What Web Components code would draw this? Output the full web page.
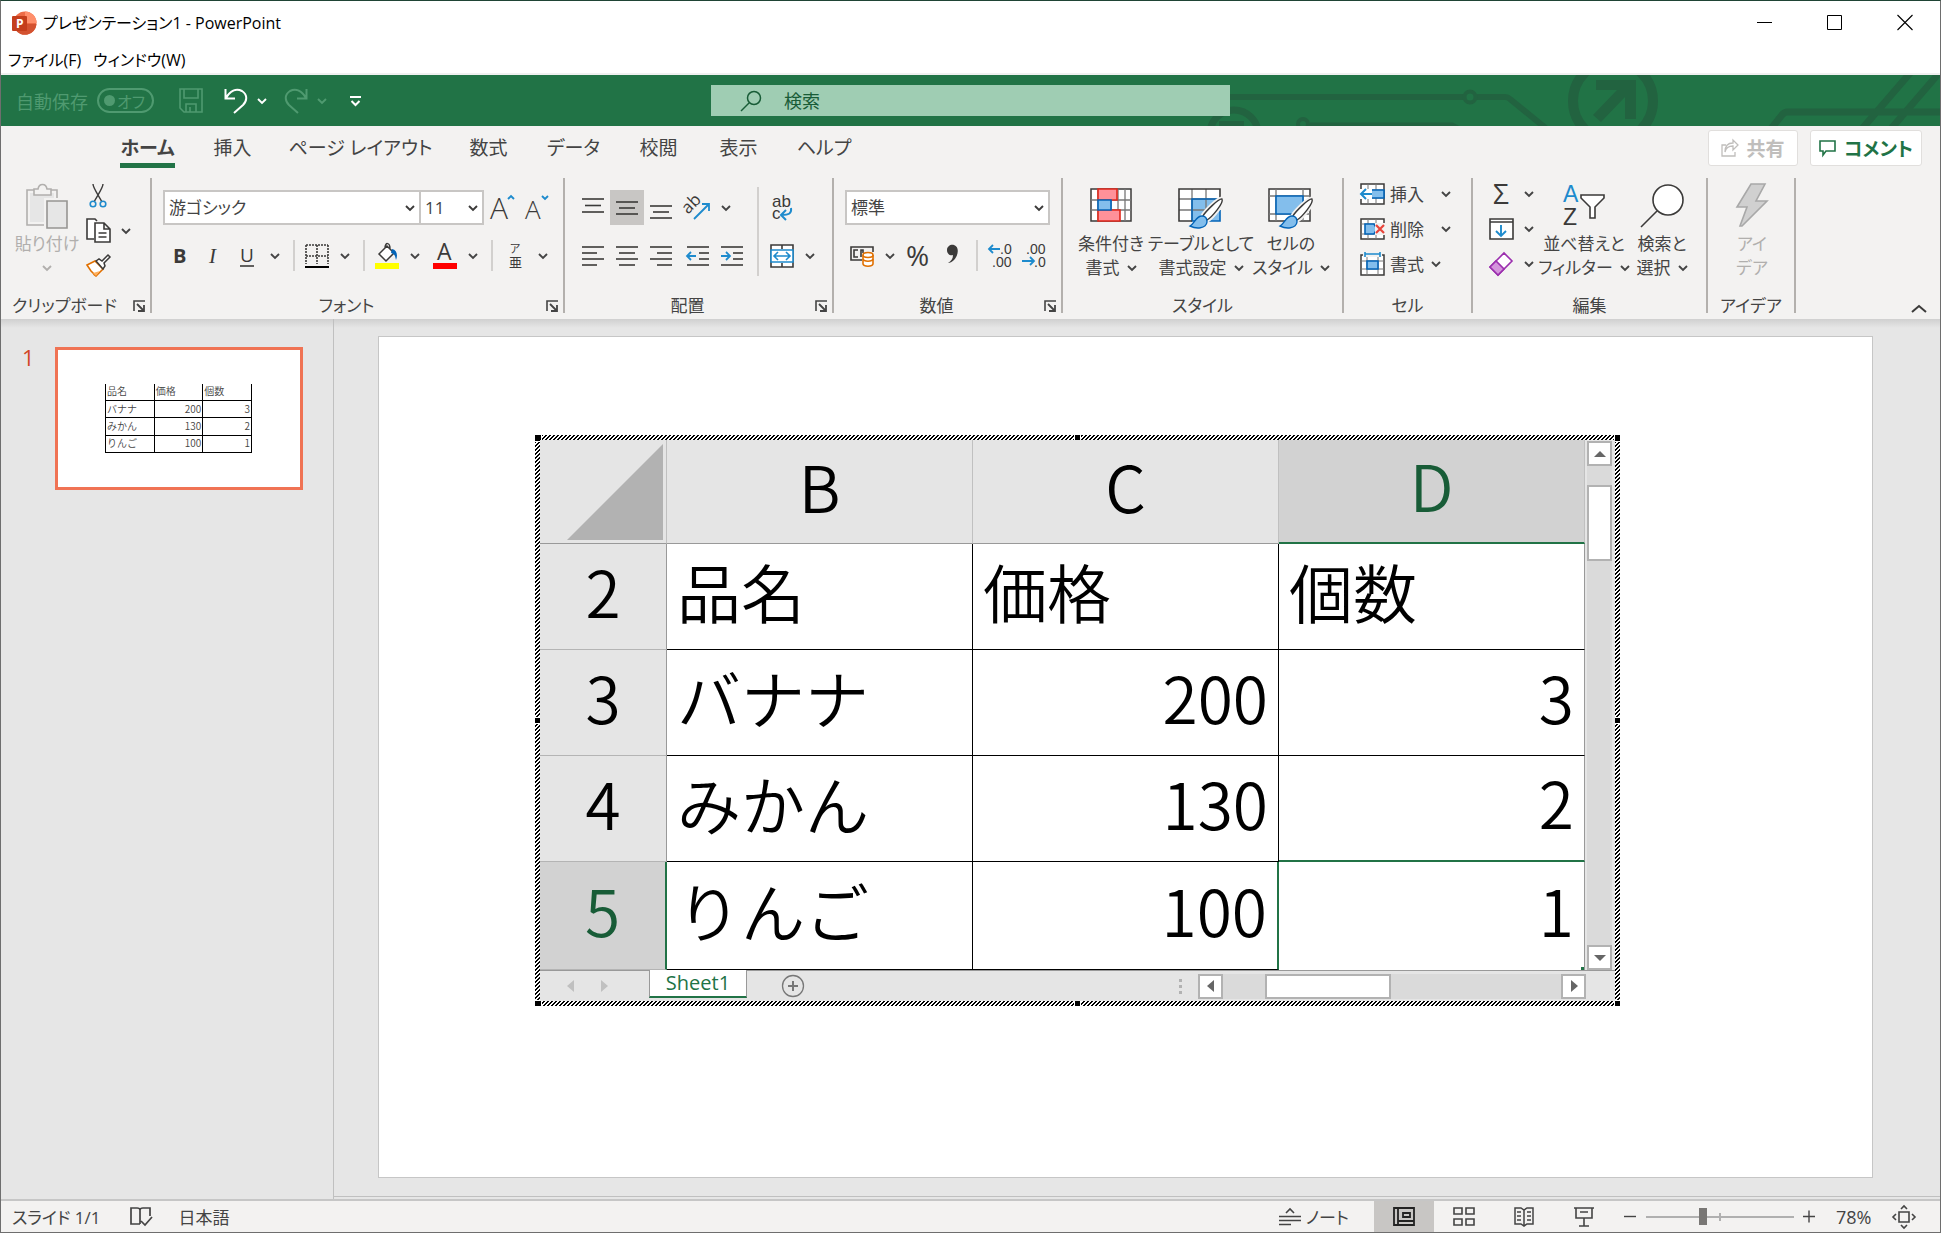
<!DOCTYPE html>
<html lang="ja">
<head>
<meta charset="utf-8">
<title>プレゼンテーション1 - PowerPoint</title>
<style>
html,body{margin:0;height:100%}
body{font-family:"Open Sans","Noto Sans CJK JP",sans-serif;font-size:17px;color:#444;font-feature-settings:"palt";overflow:hidden}
</style>
</head>
<body>
<office-app></office-app>
<script>
const D='#3b3a39', B='#1e8bcd', F='#83beec', E='#0364b8';
const grid=(w,h)=>`<path d="M1 1H${w-1}V${h-1}H1z" fill="#fff" stroke="${D}" stroke-width="1.5"/>`;
const brush=`<path d="M44 11c-3-1-17 13-19 17l4 4c5-3 17-17 15-21z" fill="#fff" stroke="#f3f2f1" stroke-width="5"/><path d="M44 11c-3-1-17 13-19 17l4 4c5-3 17-17 15-21z" fill="#fff" stroke="${D}" stroke-width="1.4"/><path d="M24 28c-6 0-7 7-12 10 6 3 16 3 17-4 0-4-2-6-5-6z" fill="${F}" stroke="${E}" stroke-width="1.4"/>`;
const lines=(a)=>a.map(([x,y,w])=>`<path d="M${x} ${y}h${w}" stroke="${D}" stroke-width="1.6"/>`).join('');
const LS='font-family="Liberation Sans"';
const ICONS={
 app:[25,24,`<circle cx="13" cy="12" r="11.5" fill="#ed6c47"/><path d="M13 .5A11.500 11.500 0 0 1 24.500 12H13z" fill="#ff8f6b"/><path d="M2 13h22.500A11.500 11.500 0 0 1 3 18z" fill="#d35230"/><rect x="0" y="5" width="15" height="15" rx="1" fill="#c43e1c"/><text x="4" y="17" font-size="12" font-weight="700" fill="#fff">P</text>`],
 min:[16,16,`<path d="M0 8.500h15" stroke="#000"/>`],
 max:[16,16,`<path d="M.5 1.500h14v14h-14z" fill="none" stroke="#000"/>`],
 close:[16,16,`<path d="M.5 1l15 15M15.500 1l-15 15" stroke="#000" stroke-width="1.100"/>`],
 caret:[10,6,`<path d="M1 1l4 4 4-4" fill="none" stroke="currentColor" stroke-width="1.900"/>`],
 up:[16,8,`<path d="M1 7l7-6 7 6" fill="none" stroke="currentColor" stroke-width="2"/>`],
 save:[24,25,`<path d="M1 1h22v23H5l-4-4zM5 1v9h14V1M7 24v-8h10v8M11 24v-5" fill="none" stroke="currentColor" stroke-width="1.600"/>`],
 undo:[24,26,`<path d="M1.500 1v9.500H11M2 10C6 3 12 0 18 3c6 4 5 10 1 14l-9 8" fill="none" stroke="currentColor" stroke-width="2"/>`],
 redo:[24,26,`<path d="M22.500 1v9.500H13M22 10C18 3 12 0 6 3c-6 4-5 10-1 14l9 8" fill="none" stroke="currentColor" stroke-width="2"/>`],
 custom:[11,10,`<path d="M0 1h11" stroke="#fff" stroke-width="2"/><path d="M1.500 5l4 4 4-4" fill="none" stroke="#fff" stroke-width="2"/>`],
 search:[22,22,`<circle cx="14" cy="8" r="6.500" fill="none" stroke="#185c37" stroke-width="1.500"/><path d="M9 13l-8 8" stroke="#185c37" stroke-width="1.500"/>`],
 share:[18,18,`<path d="M5 6H1v11h13v-4M4 13c1-5 4-6 8-6v4l5-5-5-5v3C7 4 4 7 4 13z" fill="none" stroke="currentColor" stroke-width="1.300"/>`],
 comment:[18,16,`<path d="M1 1h15v10H7l-3 4v-4H1z" fill="none" stroke="currentColor" stroke-width="1.600"/>`],
 paste:[42,46,`<path d="M1 7h30v35H1z" fill="#f3f2f1" stroke="#b1afad" stroke-width="1.600"/><path d="M4 10h24v29H4z" fill="#e6e6e6"/><path d="M8 12V6h4c1-6 8-6 9 0h4v6z" fill="#f3f2f1" stroke="#b1afad" stroke-width="1.600"/><path d="M18 15h24v31H18z" fill="#f3f2f1"/><path d="M21 18h20v27H21z" fill="#e6e6e6" stroke="#979593" stroke-width="1.600"/>`],
 cut:[18,24,`<path d="M4 0c0 4 6 12 9 18M14 0c0 4-6 12-9 18" fill="none" stroke="${D}" stroke-width="1.400"/><circle cx="4" cy="20" r="2.800" fill="none" stroke="${B}" stroke-width="1.600"/><circle cx="14" cy="20" r="2.800" fill="none" stroke="${B}" stroke-width="1.600"/>`],
 copy:[25,25,`<path d="M8 21H1V1h8l2 2" fill="#fff" stroke="${D}" stroke-width="1.600"/><path d="M9 5h9l6 6v13H9zM18 5v6h6M12.500 15h8M12.500 19h8" fill="#fff" stroke="${D}" stroke-width="1.600"/>`],
 painter:[25,23,`<path d="M1 11l8-4 8 8-7 7c-2-1-3-3-3-3l-2-2z" fill="#fff" stroke="#e07000" stroke-width="1.600"/><path d="M7 19l7-2-4 5z" fill="#ffb05c"/><path d="M10 7l3-2 3 2 6-6 2 2-6 6 1 3-2 3z" fill="#fff" stroke="${D}" stroke-width="1.500"/>`],
 launch:[12,12,`<path d="M1 11V1h11" fill="none" stroke="#444" stroke-width="1.600"/><path d="M4 4l7 7M11 5v6H5" fill="none" stroke="#444" stroke-width="1.800"/>`],
 grow:[26,26,`<text x="0" y="24" font-size="30" font-weight="300" fill="${D}">A</text><path d="M18 4l3-3 3 3" fill="none" stroke="${B}" stroke-width="1.900"/>`],
 shrink:[26,26,`<text x="1" y="24" font-size="26" font-weight="300" fill="${D}">A</text><path d="M18 1l3 3 3-3" fill="none" stroke="${B}" stroke-width="1.900"/>`],
 bold:[18,24,`<text x="3" y="19" font-size="20" font-weight="700" fill="${D}">B</text>`],
 italic:[18,24,`<text x="5" y="19" font-size="21" font-style="italic" font-family="Liberation Serif" fill="${D}">I</text>`],
 under:[18,24,`<text x="2" y="18" font-size="19" fill="${D}">U</text><path d="M2 22h14" stroke="${D}" stroke-width="1.600"/>`],
 borders:[24,24,`<path d="M1 1h22M1 12h22M1 1v19M12 1v19M23 1v19" fill="none" stroke="${D}" stroke-width="1.600" stroke-dasharray="2 1"/><path d="M0 23h24" stroke="#000" stroke-width="2"/>`],
 fill:[24,26,`<path d="M4 11l8-8 7 7-8 8zM10 5c0-6 5-6 5 1" fill="#fff" stroke="${D}" stroke-width="1.500"/><path d="M17 6c5 1 6 6 4 11-1-4-1-6-5-7z" fill="${E}"/><rect y="20" width="24" height="6" fill="#ff0"/>`],
 color:[24,26,`<text x="4" y="17" font-size="23" fill="${D}">A</text><rect y="20" width="24" height="6" fill="red"/>`],
 ruby:[16,26,`<text x="3" y="10" font-size="11" fill="${D}">ア</text><text x="2" y="24" font-size="13" fill="${D}">亜</text>`],
 atop:[24,24,lines([[1,3,22],[4,9.5,16],[1,16,22]])],
 amid:[24,24,lines([[1,6,22],[4,12,16],[1,18,22]])],
 abot:[24,24,lines([[1,10,22],[4,16,16],[1,22,22]])],
 left:[24,24,lines([[1,3,22],[1,9,15],[1,15,22],[1,21,15]])],
 center:[24,24,lines([[1,3,22],[4,9,16],[1,15,22],[4,21,16]])],
 right:[24,24,lines([[1,3,22],[8,9,15],[1,15,22],[8,21,15]])],
 outdent:[24,24,lines([[1,3,22],[13,9,10],[13,15,10],[1,21,22]])+`<path d="M10 12H2M5 8l-4 4 4 4" fill="none" stroke="${B}" stroke-width="1.800"/>`],
 indent:[24,24,lines([[1,3,22],[13,9,10],[13,15,10],[1,21,22]])+`<path d="M1 12h8M6 8l4 4-4 4" fill="none" stroke="${B}" stroke-width="1.800"/>`],
 orient:[26,26,`<g transform="rotate(-45 8 12)"><text x="-1" y="14" font-size="17" fill="${D}">ab</text></g><path d="M9 24L24 9M17 9h7v7" fill="none" stroke="${B}" stroke-width="1.800"/>`],
 wrap:[24,26,`<text x="2" y="12" font-size="17" ${LS} fill="${D}">ab</text><text x="2" y="24" font-size="17" ${LS} fill="${D}">c</text><path d="M21 13c1 6-3 7-9 7M16 15l-5 5 5 5" fill="none" stroke="${B}" stroke-width="2"/>`],
 merge:[24,24,`<path d="M1 1h22v22H1zM12 1v4M12 19v4" fill="#fff" stroke="${D}" stroke-width="1.600"/><path d="M1 6h22v12H1z" fill="#fff" stroke="${B}" stroke-width="1.600"/><path d="M4 12h16M8 8l-4 4 4 4M16 8l4 4-4 4" fill="none" stroke="${B}" stroke-width="1.600"/>`],
 money:[26,22,`<path d="M13 15H2V2h22v5M9 5H5v7h4M14 8V5h-2v7" fill="none" stroke="${D}" stroke-width="1.600"/><path d="M14 10v9c1 3 9 3 10 0v-9" fill="#fff" stroke="#e07000" stroke-width="1.600"/><ellipse cx="19" cy="10" rx="5" ry="2.500" fill="#fff" stroke="#e07000" stroke-width="1.600"/><path d="M14 14c1 3 9 3 10 0" fill="none" stroke="#e07000" stroke-width="1.600"/>`],
 percent:[26,26,`<text x="1" y="23" font-size="28" fill="${D}">%</text>`],
 comma:[14,24,`<path d="M2 6c0-4 4-6 7-5 6 2 4 11 0 15-2 2-4 3-6 3 3-2 5-4 5-8-3 1-6-1-6-5z" fill="${D}"/>`],
 inc:[24,26,`<path d="M12 6H1M5 2L1 6l4 4" fill="none" stroke="${B}" stroke-width="1.800"/><text x="12" y="11" font-size="14" ${LS} fill="${D}">.0</text><text x="4" y="24" font-size="14" ${LS} fill="${D}">.00</text>`],
 dec:[24,26,`<text x="4" y="11" font-size="14" ${LS} fill="${D}">.00</text><path d="M0 18h12M8 14l4 4-4 4" fill="none" stroke="${B}" stroke-width="1.800"/><text x="12" y="24" font-size="14" ${LS} fill="${D}">.0</text>`],
 cond:[43,44,`<g transform="translate(0 5)">${grid(42,34)}<path d="M8 1v32M21 1v32M28 1v32M35 1v32M1 12h40M1 22h40" stroke="#777" stroke-width="1.300"/><path d="M8 1h19v11H8zM8 22h22v11H8z" fill="#ff9199" stroke="#e0281c" stroke-width="1.600"/><path d="M8 12h13v10H8z" fill="${F}" stroke="${E}" stroke-width="1.600"/></g>`],
 tstyle:[46,44,`<g transform="translate(0 5)"><path d="M14 11h28v22H14z" fill="${F}"/><path d="M1 1h41v10H14v22H1z" fill="#fff"/><path d="M1 11h41M1 22h41M14 1v32M28 1v32" stroke="#777" stroke-width="1.300"/><path d="M42 22v11H14V11h28" fill="none" stroke="${E}" stroke-width="1.600"/><path d="M14 33H1V1h41v10" fill="none" stroke="${D}" stroke-width="1.600"/>${brush}</g>`],
 cstyle:[46,44,`<g transform="translate(0 5)">${grid(43,34)}<path d="M8 1v32M35 1v32M1 8h41M1 26h41" stroke="#777" stroke-width="1.300"/><path d="M8 8h27v18H8z" fill="${F}" stroke="${E}" stroke-width="1.600"/>${brush}</g>`],
 cins:[25,22,`${grid(25,22)}<path d="M8 1v20M16 1v20M1 7h23M1 15h23" stroke="#777"/><path d="M11 7h13v8H11z" fill="${F}" stroke="${E}" stroke-width="1.600"/><path d="M0 6h12v10H0z" fill="#fff"/><path d="M12 11H2M6 6l-5 5 5 5" fill="none" stroke="${B}" stroke-width="2"/>`],
 cdel:[25,22,`${grid(25,22)}<path d="M8 1v20M16 1v20M1 6h23M1 16h23" stroke="#777"/><path d="M5 6h9l3 5-3 5H5z" fill="${F}" stroke="${E}" stroke-width="1.600"/><path d="M15 5h10v12H15z" fill="#f3f2f1"/><path d="M16 7l8 8M24 7l-8 8" stroke="#e8443a" stroke-width="2.200"/>`],
 cfmt:[25,24,`<g transform="translate(0 2)">${grid(25,22)}<path d="M7 1v20M18 1v20M1 7h23M1 15h23" stroke="#777"/><path d="M7 7h11v8H7z" fill="${F}" stroke="${E}" stroke-width="1.600"/></g><path d="M3 0h19v5H3z" fill="#f3f2f1"/><path d="M5 2h15M5 0v5M20 0v5" stroke="${B}" stroke-width="1.600"/>`],
 sum:[24,26,`<text x="4" y="23" font-size="28" fill="${D}">Σ</text>`],
 down:[25,22,`<path d="M1 1h23v20H1zM1 4h23" fill="#fff" stroke="${D}" stroke-width="1.600"/><path d="M12 7v11M7 13l5 5 5-5" fill="none" stroke="${B}" stroke-width="1.900"/>`],
 eraser:[24,24,`<path d="M1 15L15 1l8 8L9 23z" fill="#fff" stroke="#9b2fae" stroke-width="1.600"/><path d="M1 15l6-6 8 8-6 6z" fill="#d494dc" stroke="#9b2fae" stroke-width="1.600"/>`],
 sort:[44,44,`<text x="1" y="19" font-size="23" ${LS} fill="${B}">A</text><text x="1" y="42" font-size="23" ${LS} fill="${D}">Z</text><path d="M19 12h23v3l-9 9v11h-5V24l-9-9z" fill="#fff" stroke="${D}" stroke-width="1.600"/>`],
 find:[45,44,`<circle cx="28" cy="17" r="15" fill="#fff" stroke="${D}" stroke-width="1.600"/><path d="M17 28L1 44" stroke="${D}" stroke-width="1.600"/>`],
 bolt:[34,44,`<path d="M16 1h14l-9 17h11L7 43H5l7-19H2z" fill="#d0d0d0" stroke="#a8a8a8" stroke-width="1.600"/>`],
 tl:[8,12,`<path d="M7 0v12L0 6z" fill="currentColor"/>`], tr:[8,12,`<path d="M1 0v12l7-6z" fill="currentColor"/>`],
 tu:[12,8,`<path d="M0 7h12L6 1z" fill="currentColor"/>`], td:[12,8,`<path d="M0 1h12L6 7z" fill="currentColor"/>`],
 plus:[24,24,`<circle cx="12" cy="12" r="10.500" fill="none" stroke="#777" stroke-width="1.300"/><path d="M7 12h10M12 7v10" stroke="#777" stroke-width="2"/>`],
 corner:[96,96,`<path d="M96 0v96H0z" fill="#b2b2b2"/>`],
 proof:[24,21,`<path d="M11 18H2V2h6c2 0 3 1 3 2v14M11 4c0-1 1-2 3-2h7v8M21 2v8M12 15l4 4 7-8" fill="none" stroke="#444" stroke-width="1.700"/>`],
 notes:[22,18,`<path d="M0 8.500h22M0 12.500h22M0 16.500h12M7 5l4-4 4 4" fill="none" stroke="#444" stroke-width="1.600"/>`],
 normal:[22,19,`<path d="M1 1h20v17H1zM5 1v17M5 14h16M10 6h7v4h-7z" fill="none" stroke="#222" stroke-width="1.800"/>`],
 sorter:[22,19,`<path d="M1 1h8v6H1zM13 1h8v6h-8zM1 12h8v6H1zM13 12h8v6h-8z" fill="none" stroke="#444" stroke-width="1.600"/>`],
 read:[20,20,`<path d="M1 1h6l3 2 3-2h6v16h-6l-3 2-3-2H1zM10 3v16M3 5h4M3 9h4M3 13h4M13 5h4M13 9h4M13 13h4" fill="none" stroke="#444" stroke-width="1.500"/>`],
 show:[20,20,`<path d="M0 1h20M2 1v10h16V1M6 5h8M10 11v8M5 19h10" fill="none" stroke="#444" stroke-width="1.600"/>`],
 minus:[13,13,`<path d="M0 6.500h12" stroke="#444" stroke-width="1.400"/>`],
 add:[13,13,`<path d="M0 6.500h12M6 .5v12" stroke="#444" stroke-width="1.400"/>`],
 fit:[24,24,`<path d="M7 7h10v10H7z" fill="none" stroke="#444" stroke-width="1.600"/><path d="M9 4l3-3 3 3M9 20l3 3 3-3M4 9l-3 3 3 3M20 9l3 3-3 3" fill="none" stroke="#444" stroke-width="1.600"/>`]
};
const define=(name,render)=>customElements.define(name,class extends HTMLElement{
  connectedCallback(){
    if(this.shadowRoot)return;
    const t=document.createElement('template');
    t.innerHTML=`<style>*{box-sizing:border-box}button{font:inherit;font-feature-settings:inherit;color:inherit;background:none;border:0;padding:0;margin:0;white-space:nowrap}</style>`+render(this);
    this.attachShadow({mode:'open'}).append(t.content.cloneNode(true));
  }
});
const i=(n)=>`<ui-icon name="${n}"></ui-icon>`;

define('ui-icon',el=>{
  const [w,h,m]=ICONS[el.getAttribute('name')];
  return `<style>:host{display:inline-flex;flex:none}svg{display:block;overflow:visible}</style><svg width="${w}" height="${h}" viewBox="0 0 ${w} ${h}" aria-hidden="true">${m}</svg>`;
});

/* small ribbon command: icon cell, optional text and optional caret */
define('tool-button',el=>`<style>
:host{display:flex;height:35px;flex:none}
button{display:flex;align-items:center;height:100%}
.i{width:34px;height:100%;display:flex;align-items:center;justify-content:center}
.c{width:22px;display:flex;justify-content:center}
:host([on]) .i{background:#c8c6c4}
.t{min-width:36px}
:host([wide]) .c{margin-left:10px}
</style><button aria-label="${el.getAttribute('label')||''}"><span class="i">${i(el.getAttribute('icon'))}</span>${el.hasAttribute('text')?`<span class="t">${el.getAttribute('text')}</span>`:''}${el.hasAttribute('menu')?`<span class="c">${i('caret')}</span>`:''}</button>`);

/* tall ribbon command with two lines of text */
define('big-button',el=>`<style>
:host{display:block;flex:none}
:host([disabled]){color:#b1afad}
button{display:flex;flex-direction:column;align-items:center;width:100%;padding-top:5px;line-height:24px}
.i{height:49px}
.l{display:flex;align-items:center;gap:7px;height:24px}
</style><button ${el.hasAttribute('disabled')?'disabled':''}><span class="i">${i(el.getAttribute('icon'))}</span><span class="l">${el.getAttribute('a')}</span><span class="l">${el.getAttribute('b')||''}${el.hasAttribute('menu')?i('caret'):''}</span></button>`);

define('ribbon-group',el=>`<style>
:host{display:flex;flex-direction:column;flex:none;height:135px;border-right:2px solid #b3b0ad}
.tools{flex:1;display:flex;min-height:0}
.foot{display:flex;height:15px;line-height:15px;align-items:center}
.foot span{flex:1;text-align:center;white-space:nowrap}
:host([launcher]) .foot span{padding-right:5px}
button{display:flex;width:12px;height:12px;margin-right:5px}
</style><div class="tools"><slot></slot></div><div class="foot"><span>${el.getAttribute('label')}</span>${el.hasAttribute('launcher')?`<button aria-label="詳細">${i('launch')}</button>`:''}</div>`);

define('combo-box',el=>`<style>
:host{display:block;position:relative;height:35px}
select{appearance:none;width:100%;height:100%;border:2px solid #c8c6c4;border-radius:0;background:#fff;color:#444;font:inherit;font-feature-settings:inherit;padding:0 24px 0 4px;margin:0}
ui-icon{position:absolute;right:6px;top:15px;color:#3b3a39}
</style><select aria-label="${el.getAttribute('label')}"><option>${el.getAttribute('value')}</option></select>${i('caret')}`);

define('title-bar',()=>`<style>
:host{display:block;background:#fff;color:#000;border-bottom:2px solid #f0f0f0;font-size:16px}
.top{display:flex;align-items:center;height:41px;padding-left:11px}
h1{flex:1;margin:2px 0 0 6px;font-weight:400;font-size:16px;line-height:24px}
.top>ui-icon{margin-top:2px}
.win{width:70px;height:41px;display:flex;align-items:center;justify-content:center}
nav{display:flex;height:31px;padding:2px 0 0 7px;gap:12px}
</style><div class="top">${i('app')}<h1>プレゼンテーション1 - PowerPoint</h1>
<button class="win" aria-label="最小化">${i('min')}</button><button class="win" aria-label="最大化">${i('max')}</button><button class="win" aria-label="閉じる">${i('close')}</button></div>
<nav><button>ファイル(F)</button><button>ウィンドウ(W)</button></nav>`);

define('quick-bar',()=>`<style>
:host{display:grid;grid-template-columns:1fr 519px 1fr;align-items:center;height:51px;background:#217346;color:#fff;position:relative;overflow:hidden}
.art{position:absolute;right:-1px;top:0}
.q{display:flex;align-items:center;padding-left:15px;color:#4f9a70;font-size:18px}
.q button{display:flex}
.q label{display:flex;align-items:center;gap:9px}
input[type=checkbox]{position:absolute;opacity:0}
.sw{width:57px;height:25px;border:2px solid;border-radius:13px;display:flex;align-items:center;justify-content:space-between;padding:0 7px 0 5px;font-size:16px}
.sw i{width:11px;height:11px;border-radius:50%;background:currentColor}
.save{margin-left:25px}.un{margin-left:21px}.w{color:#fff}.ca{margin-left:9px}.re{margin-left:17px}.cu{margin-left:23px}
.s{position:relative;display:flex;align-items:center;height:31px;background:#9fcdb3;padding-left:29px;gap:22px}
.s input{flex:1;border:0;background:none;outline:0;font:inherit;font-size:18px;padding:0;color:#185c37}
.s input::placeholder{color:#185c37;opacity:1}
</style>
<svg class="art" width="741" height="51" viewBox="1200 75 741 51" aria-hidden="true" fill="none" stroke="#226340">
<path d="M1225 97h239M1477 97h28q3 0 5 2l38 31" stroke-width="6"/><circle cx="1470" cy="97" r="5.500" stroke-width="4"/>
<circle cx="1613" cy="101" r="40" stroke-width="10"/><path d="M1596 80h40v39h-11V97l-24 25-8-7 24-25h-21z" fill="#226340" stroke="none"/>
<circle cx="1234" cy="134" r="24" stroke-width="7"/><path d="M1219 121h25v5h-25z" fill="#226340" stroke="none"/>
<circle cx="1303" cy="124" r="5" stroke-width="4"/><path d="M1310 125h142l8 4" stroke-width="5"/>
<path d="M1770 130l12-15q2-3 6-3h160M1911 72l-50 58M1940 72l-50 58" stroke-width="7"/></svg>
<div class="q"><label>自動保存<input type="checkbox" disabled><span class="sw"><i></i>オフ</span></label>
<button class="save" aria-label="保存">${i('save')}</button><button class="un w" aria-label="元に戻す">${i('undo')}</button><button class="ca w" aria-label="元に戻す一覧">${i('caret')}</button><button class="re" aria-label="やり直し">${i('redo')}</button><button class="ca" aria-label="やり直し一覧">${i('caret')}</button><button class="cu" aria-label="カスタマイズ">${i('custom')}</button></div>
<label class="s">${i('search')}<input type="text" placeholder="検索" aria-label="検索"></label>`);

define('tab-strip',()=>`<style>
:host{display:flex;align-items:flex-start;height:52px;padding:4px 18px 0 104px;font-size:19px}
.t{width:85px;height:38px;display:flex;justify-content:center;text-decoration:none;color:#444;white-space:nowrap;line-height:36px}
.on{font-weight:700}.on span{border-bottom:5px solid #217346;height:38px}
.l{width:171px}.s{width:75px}.m{width:96px}
.sp{flex:1}
.b{height:36px;border:1px solid #e1dfdd;border-radius:3px;background:#fff;display:flex;align-items:center;justify-content:center;gap:7px;font-weight:700}
.sh{width:90px;color:#c0bebc;margin-right:12px}.co{width:112px;color:#217346}
</style><a class="t on" href="#"><span>ホーム</span></a><a class="t" href="#">挿入</a><a class="t l" href="#">ページ レイアウト</a><a class="t" href="#">数式</a><a class="t" href="#">データ</a><a class="t" href="#">校閲</a><a class="t s" href="#">表示</a><a class="t m" href="#">ヘルプ</a><span class="sp"></span>
<button class="b sh" disabled>${i('share')}共有</button><button class="b co">${i('comment')}コメント</button>`);

const tb=(icon,label,x='')=>`<tool-button icon="${icon}" label="${label}" ${x}></tool-button>`;
define('ribbon-bar',()=>`<style>
:host{display:flex;height:141px;position:relative;color:#444}
.rows{display:flex;flex-direction:column;gap:13px;padding-top:12px}
.row{display:flex;align-items:center}
.row.cb{align-items:flex-start;padding-left:12px}
.col{display:flex;flex-direction:column}
.sep{width:2px;height:31px;background:#d2d0ce;margin:0 5px 0 7px}
.nosep{width:2px}
.tall{width:2px;height:89px;background:#d2d0ce;margin:9px 6px 0 8px}
.gap{margin-left:3px}
.up{margin-top:-2px}
.cl{width:151px}.fo{width:413px}.al{width:269px}.nu{width:229px}.st{width:281px}.ce{width:129px}.ed{width:235px}.id{width:88px}
.f{padding-left:10px}.n{padding-left:11px}
.w68{width:68px}.w84{width:84px}.w88{width:88px}.w96{width:96px}
.fn{width:258px;margin-left:1px}.fs{width:65px;margin-left:-2px;margin-right:2px}.nf{width:205px}
.coll{position:absolute;right:13px;bottom:6px;display:flex;color:#3b3a39}
</style>
<ribbon-group class="cl" label="クリップボード" launcher><div class="row cb"><big-button class="w68" icon="paste" a="貼り付け" disabled menu></big-button><div class="col">${tb('cut','切り取り')}${tb('copy','コピー','menu')}${tb('painter','書式のコピー')}</div></div></ribbon-group>
<ribbon-group class="fo" label="フォント" launcher><div class="rows f"><div class="row"><combo-box class="fn" label="フォント" value="游ゴシック"></combo-box><combo-box class="fs" label="サイズ" value="11"></combo-box>${tb('grow','拡大')}${tb('shrink','縮小')}</div>
<div class="row">${tb('bold','太字')}${tb('italic','斜体')}${tb('under','下線','menu')}<span class="sep"></span>${tb('borders','罫線','menu')}<span class="sep"></span>${tb('fill','塗りつぶし','menu')}<span class="nosep"></span>${tb('color','文字色','menu')}<span class="sep"></span>${tb('ruby','ふりがな','menu')}</div></div></ribbon-group>
<ribbon-group class="al" label="配置" launcher><div class="rows n"><div class="row">${tb('atop','上')}${tb('amid','中央','on')}${tb('abot','下')}${tb('orient','方向','menu class="gap"')}</div><div class="row">${tb('left','左')}${tb('center','中央')}${tb('right','右')}${tb('outdent','減','class="gap"')}${tb('indent','増')}</div></div><span class="tall"></span><div class="rows">${tb('wrap','折り返し')}${tb('merge','結合','menu')}</div></ribbon-group>
<ribbon-group class="nu" label="数値" launcher><div class="rows n"><combo-box class="nf" label="表示形式" value="標準"></combo-box><div class="row">${tb('money','通貨','menu')}${tb('percent','パーセント')}${tb('comma','桁区切り')}<span class="sep"></span>${tb('inc','増')}${tb('dec','減')}</div></div></ribbon-group>
<ribbon-group class="st" label="スタイル"><big-button class="w96" icon="cond" a="条件付き" b="書式" menu></big-button><big-button class="w84" icon="tstyle" a="テーブルとして" b="書式設定" menu></big-button><big-button class="w96" icon="cstyle" a="セルの" b="スタイル" menu></big-button></ribbon-group>
<ribbon-group class="ce" label="セル"><div class="col n up">${tb('cins','挿入','text="挿入" menu wide')}${tb('cdel','削除','text="削除" menu wide')}${tb('cfmt','書式','text="書式" menu')}</div></ribbon-group>
<ribbon-group class="ed" label="編集"><div class="col n up">${tb('sum','合計','menu')}${tb('down','フィル','menu')}${tb('eraser','クリア','menu')}</div><big-button class="w88" icon="sort" a="並べ替えと" b="フィルター" menu></big-button><big-button class="w68" icon="find" a="検索と" b="選択" menu></big-button></ribbon-group>
<ribbon-group class="id" label="アイデア"><big-button class="w88" icon="bolt" a="アイ" b="デア" disabled></big-button></ribbon-group>
<button class="coll" aria-label="リボンを折りたたむ">${i('up')}</button>`);

define('slide-thumbs',()=>`<style>
:host{display:flex;align-items:flex-start;width:333px;flex:none;border-right:1px solid #c0c0c0;padding:28px 0 0 21px}
.n{width:33px;color:#d24726;font-size:22px;line-height:20px}
.th{width:248px;height:143px;border:3px solid #f07354;background:#fff;display:flex;padding:34px 47px;text-align:left}
table{border-collapse:collapse;table-layout:fixed;width:147px;color:#444;font-family:"Noto Sans CJK JP",sans-serif;font-size:10px;font-weight:350;font-feature-settings:normal}
td{height:17px;line-height:10px;border:1px solid #000;padding:0 1px 1px;white-space:nowrap}
tr:first-child td{border-top:0;height:16px}.r{text-align:right}
</style><span class="n">1</span><div class="th"><table><tr><td>品名<td>価格<td>個数</tr><tr><td>バナナ<td class="r">200<td class="r">3</tr><tr><td>みかん<td class="r">130<td class="r">2</tr><tr><td>りんご<td class="r">100<td class="r">1</tr></table></div>`);

define('sheet-object',()=>`<style>
:host{display:block;position:relative;width:1085px;padding:5px;font-feature-settings:normal}
.hatch{position:absolute;inset:0;width:100%;height:100%}
.in{position:relative;background:#e5e5e5}
.g{display:flex}
table{table-layout:fixed;width:1045px;border-collapse:separate;border-spacing:0;font-family:"Noto Sans CJK JP",sans-serif;font-size:64px;font-weight:350;color:#000;line-height:64px}
th,td{height:106px;padding:0 10px 14px;border:0 solid #000;border-width:0 1px 1px 0;white-space:nowrap}
th{font-weight:inherit;text-align:center;background:#e5e5e5;border-color:#999}
td{background:#fff}
thead th{height:104px;border-right-color:#c0c0c0}
tbody th{border-bottom-color:#b4b4b4}
thead th.corner{padding:4px 3px 3px 27px;vertical-align:top;line-height:0}
tr:last-child td,tbody tr:last-child th{height:108px}
.r{text-align:right}
.on{background:#d2d2d2;color:#185c37}
thead .on{border-bottom:2px solid #217346}
tbody .on{border-right:2px solid #217346}
td:last-child{border-right-color:#999}
.gb{border-bottom:2px solid #217346}.gr{border-right:2px solid #217346}
.act{border-bottom:0;position:relative}
.act::after{content:"";position:absolute;right:0;bottom:0;width:3px;height:3px;background:#217346}
.v{width:30px;padding:1px 3px 0 2px;display:flex;flex-direction:column}
.v .tk,.h .tk{flex:1;background:#dadada}
.b{width:25px;height:25px;background:#fff;border:2px solid #b2b2b2;display:flex;align-items:center;justify-content:center;color:#666}
.thumb{background:#fff;border:2px solid #b2b2b2}
.v .thumb{height:76px;margin-top:19px}
.h{width:388px;height:25px;display:flex}
.h .thumb{width:126px;height:25px;margin-left:42px}
.bar{display:flex;height:31px;border-top:1px solid #999;padding:0 29px 0 14px;align-items:center}
.nv{width:33px;display:flex;justify-content:center;color:#c0c0c0}
.tab{align-self:flex-start;width:98px;height:28px;margin:-1px 34px 0 29px;background:#fff;color:#217346;border:1px solid #999;border-width:0 1px 2px;border-bottom-color:#217346;font-size:20px;line-height:24px}
.add{display:flex}
.sp{flex:1}
.dots{display:grid;gap:3px;margin-right:16px}.dots i{width:3px;height:3px;background:#b2b2b2}
</style>
<svg class="hatch" aria-hidden="true" shape-rendering="crispEdges"><defs><pattern id="p" width="4" height="4" patternUnits="userSpaceOnUse"><rect width="4" height="4" fill="#fff"/><path d="M2 0h2v1H2zM1 1h2v1H1zM0 2h2v1H0zM0 3h1v1H0zM3 3h1v1H3z" fill="#000"/></pattern></defs><rect width="100%" height="100%" fill="url(#p)"/>
<g fill="#000" stroke="#fff"><rect x="-1" y="-1" width="7" height="7"/><rect x="50%" y="-1" width="6" height="7" transform="translate(-3)"/><rect x="100%" y="-1" width="7" height="7" transform="translate(-6)"/><rect x="-1" y="50%" width="7" height="6" transform="translate(0 -3)"/><rect x="100%" y="50%" width="7" height="6" transform="translate(-6 -3)"/><rect x="-1" y="100%" width="7" height="7" transform="translate(0 -6)"/><rect x="50%" y="100%" width="6" height="7" transform="translate(-3 -6)"/><rect x="100%" y="100%" width="7" height="7" transform="translate(-6 -6)"/></g></svg>
<div class="in"><div class="g"><table><colgroup><col style="width:127px"><col><col><col></colgroup>
<thead><tr><th class="corner">${i('corner')}</th><th>B</th><th>C</th><th class="on">D</th></tr></thead>
<tbody><tr><th>2</th><td>品名</td><td>価格</td><td>個数</td></tr>
<tr><th>3</th><td>バナナ</td><td class="r">200</td><td class="r">3</td></tr>
<tr><th>4</th><td>みかん</td><td class="r">130</td><td class="r gb">2</td></tr>
<tr><th class="on">5</th><td>りんご</td><td class="r gr">100</td><td class="r act">1</td></tr></tbody></table>
<div class="v"><button class="b" aria-label="上へ">${i('tu')}</button><div class="tk"><div class="thumb"></div></div><button class="b" aria-label="下へ">${i('td')}</button></div></div>
<div class="bar"><button class="nv" aria-label="前のシート">${i('tl')}</button><button class="nv" aria-label="次のシート">${i('tr')}</button><button class="tab">Sheet1</button><button class="add" aria-label="新しいシート">${i('plus')}</button><span class="sp"></span><span class="dots"><i></i><i></i><i></i></span><div class="h"><button class="b" aria-label="左へ">${i('tl')}</button><div class="tk"><div class="thumb"></div></div><button class="b" aria-label="右へ">${i('tr')}</button></div></div></div>`);

define('slide-stage',()=>`<style>
:host{display:flex;flex:1;padding:17px 67px 18px 44px;border-bottom:1px solid #c0c0c0;margin-bottom:2px;min-width:0}
.slide{position:relative;flex:1;background:#fff;border:1px solid #c6c6c6}
sheet-object{position:absolute;left:156px;top:98px}
</style><div class="slide"><sheet-object></sheet-object></div>`);

define('status-bar',()=>`<style>
:host{display:flex;align-items:center;height:33px;border-top:2px solid #c6c6c6;background:#f3f2f1;padding:0 24px 0 11px}
button{display:flex}
.p{margin:0 26px 0 28px}
.sp{flex:1}
.n{align-items:center;gap:5px;margin-right:25px}
.v{width:60px;height:31px;align-items:center;justify-content:center}
.on{background:#c8c6c4}
.mi{margin-left:10px}
input{appearance:none;width:148px;height:20px;margin:0 9px;background:linear-gradient(#b0b0b0,#b0b0b0) 0 50%/100% 2px no-repeat,linear-gradient(#b0b0b0,#b0b0b0) 50% 50%/2px 8px no-repeat}
input::-webkit-slider-thumb{appearance:none;width:8px;height:17px;background:#797775;border:0;border-radius:0}
.z{width:40px;font-size:18px;margin:0 16px 0 20px}
</style><span>スライド 1/1</span><button class="p" aria-label="校正">${i('proof')}</button><span>日本語</span><span class="sp"></span>
<button class="n">${i('notes')}ノート</button><button class="v on" aria-label="標準">${i('normal')}</button><button class="v" aria-label="一覧">${i('sorter')}</button><button class="v" aria-label="閲覧">${i('read')}</button><button class="v" aria-label="スライドショー">${i('show')}</button>
<button class="mi" aria-label="縮小">${i('minus')}</button><input type="range" min="0" max="100" value="38" aria-label="ズーム"><button aria-label="拡大">${i('add')}</button><span class="z">78%</span><button aria-label="合わせる">${i('fit')}</button>`);

define('office-app',()=>`<style>
:host{display:flex;flex-direction:column;height:100vh;box-sizing:border-box;border:1px solid #6e6e6e;border-top-color:#1f4435;background:#e6e6e6}
.rb{background:#f3f2f1}
main{flex:1;display:flex;min-height:0;background:linear-gradient(#d0d0d0,#e6e6e6) 0 0/100% 9px no-repeat}
</style><title-bar></title-bar><quick-bar></quick-bar><div class="rb"><tab-strip></tab-strip><ribbon-bar></ribbon-bar></div><main><slide-thumbs></slide-thumbs><slide-stage></slide-stage></main><status-bar></status-bar>`);
</script>
</body>
</html>
